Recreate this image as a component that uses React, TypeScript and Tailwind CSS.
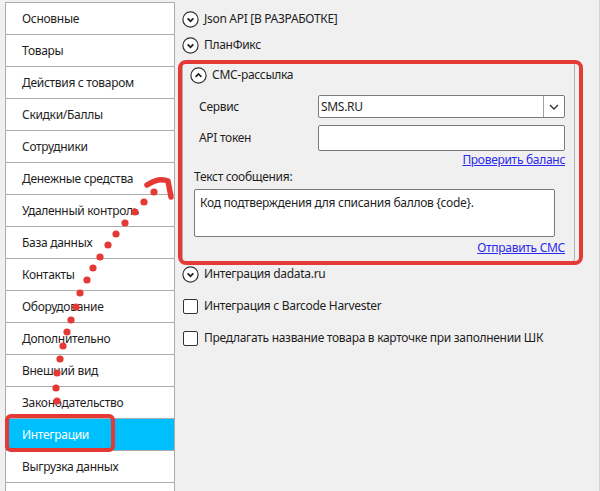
import React from "react";

const font = { fontFamily: '"Noto Sans", "Open Sans", Arial, sans-serif' };

const menu = [
  "Основные",
  "Товары",
  "Действия с товаром",
  "Скидки/Баллы",
  "Сотрудники",
  "Денежные средства",
  "Удаленный контроль",
  "База данных",
  "Контакты",
  "Оборудование",
  "Дополнительно",
  "Внешний вид",
  "Законодательство",
  "Интеграции",
  "Выгрузка данных",
  "",
];

function CircleChevron({ up = false }: { up?: boolean }) {
  return (
    <svg width="17" height="17" viewBox="0 0 17 17" className="shrink-0">
      <circle cx="8.5" cy="8.5" r="7.6" fill="#fff" stroke="#333" strokeWidth="1.2" />
      {up ? (
        <path d="M5.6 9.8 L8.5 6.9 L11.4 9.8" fill="none" stroke="#222" strokeWidth="1.7" />
      ) : (
        <path d="M5.6 7.3 L8.5 10.2 L11.4 7.3" fill="none" stroke="#222" strokeWidth="1.7" />
      )}
    </svg>
  );
}

function Header({ label, up }: { label: string; up?: boolean }) {
  return (
    <div className="flex h-[26px] items-center gap-[5px]">
      <CircleChevron up={up} />
      <span>{label}</span>
    </div>
  );
}

function CheckRow({ label }: { label: string }) {
  return (
    <div className="flex h-[32px] items-center gap-[6px]">
      <div className="h-[15px] w-[15px] rounded-[2px] border border-[#333] bg-white" />
      <span>{label}</span>
    </div>
  );
}

const dots: [number, number][] = [
  [57, 401], [56, 388], [57, 373], [60, 359], [63, 346], [67, 332], [71, 320],
  [76, 307], [80, 293], [87, 280], [93, 268], [100, 257], [108, 245], [116, 234],
  [125, 223], [135, 212], [144, 202], [154, 192],
];

export default function App() {
  return (
    <div
      className="relative h-[491px] w-[600px] overflow-hidden bg-[#f0f0f0] text-[12px] tracking-[-0.3px] text-[#1e1e1e]"
      style={font}
    >
      <div className="flex h-full">
        {/* sidebar */}
        <div className="ml-[5px] mt-[2px] flex w-[170px] flex-col border-l border-r border-t border-[#acacac] bg-white">
          {menu.map((m) => (
            <div
              key={m}
              className={`flex h-[32px] shrink-0 items-center border-b border-[#acacac] pl-[16px] ${
                m === "Интеграции" ? "bg-[#00bfff] text-white" : ""
              }`}
            >
              {m}
            </div>
          ))}
        </div>

        {/* content */}
        <div className="flex flex-1 flex-col border-r border-[#d4d4d4] pl-[7px] pr-[24px] pt-[6px]">
          <Header label="Json API [В РАЗРАБОТКЕ]" />
          <Header label="ПланФикс" />

          <div className="mt-[3px] h-[201px] rounded-[3px] border border-[#b0b0b0] pl-[7px] pr-[9px]">
            <Header label="СМС-рассылка" up />
            <div className="mt-[7px] flex h-[23px] items-center">
              <span className="w-[128px] pl-[9px]">Сервис</span>
              <div className="flex h-[23px] flex-1 items-center rounded-[2px] border border-[#7a7a7a] bg-white">
                <span className="flex-1 pl-[2px]">SMS.RU</span>
                <div className="flex h-full w-[21px] items-center justify-center border-l border-[#a0a0a0]">
                  <svg width="10" height="6" viewBox="0 0 10 6">
                    <path d="M1 1 L5 5 L9 1" fill="none" stroke="#333" strokeWidth="1.4" />
                  </svg>
                </div>
              </div>
            </div>
            <div className="mt-[7px] flex h-[26px] items-center">
              <span className="w-[128px] pl-[9px]">API токен</span>
              <div className="h-[26px] flex-1 rounded-[2px] border border-[#7a7a7a] bg-white" />
            </div>
            <div className="flex h-[16px] justify-end">
              <span className="text-[#2a2aee] underline decoration-[#2a2aee]">Проверить баланс</span>
            </div>
            <div className="pl-[4px] pt-[1px]">Текст сообщения:</div>
            <div className="ml-[4px] mr-[10px] mt-[3px] h-[48px] rounded-[2px] border border-[#7a7a7a] bg-white px-[5px] pt-[4px]">
              Код подтверждения для списания баллов {"{code}"}.
            </div>
            <div className="mt-[2px] flex h-[16px] justify-end">
              <span className="text-[#2a2aee] underline decoration-[#2a2aee]">Отправить СМС</span>
            </div>
          </div>

          <div className="-mt-[1px]">
            <Header label="Интеграция dadata.ru" />
          </div>
          <div className="mt-[3px] pl-[1px]">
            <CheckRow label="Интеграция с Barcode Harvester" />
            <CheckRow label="Предлагать название товара в карточке при заполнении ШК" />
          </div>
        </div>
      </div>

      {/* annotations */}
      <div className="pointer-events-none absolute left-[178px] top-[60px] h-[205px] w-[405px] rounded-[8px] border-4 border-[#e53935]" />
      <div className="pointer-events-none absolute left-[5px] top-[414px] h-[38px] w-[110px] rounded-[6px] border-4 border-[#e53935]" />
      <svg className="pointer-events-none absolute left-0 top-0" width="600" height="491">
        {dots.map(([x, y], i) => (
          <circle key={i} cx={x} cy={y} r="3.6" fill="#e53935" />
        ))}
        <path
          d="M147 185 Q159 177 168 181 L171 197"
          fill="none"
          stroke="#e53935"
          strokeWidth="5.5"
          strokeLinecap="round"
          strokeLinejoin="round"
        />
      </svg>
    </div>
  );
}
